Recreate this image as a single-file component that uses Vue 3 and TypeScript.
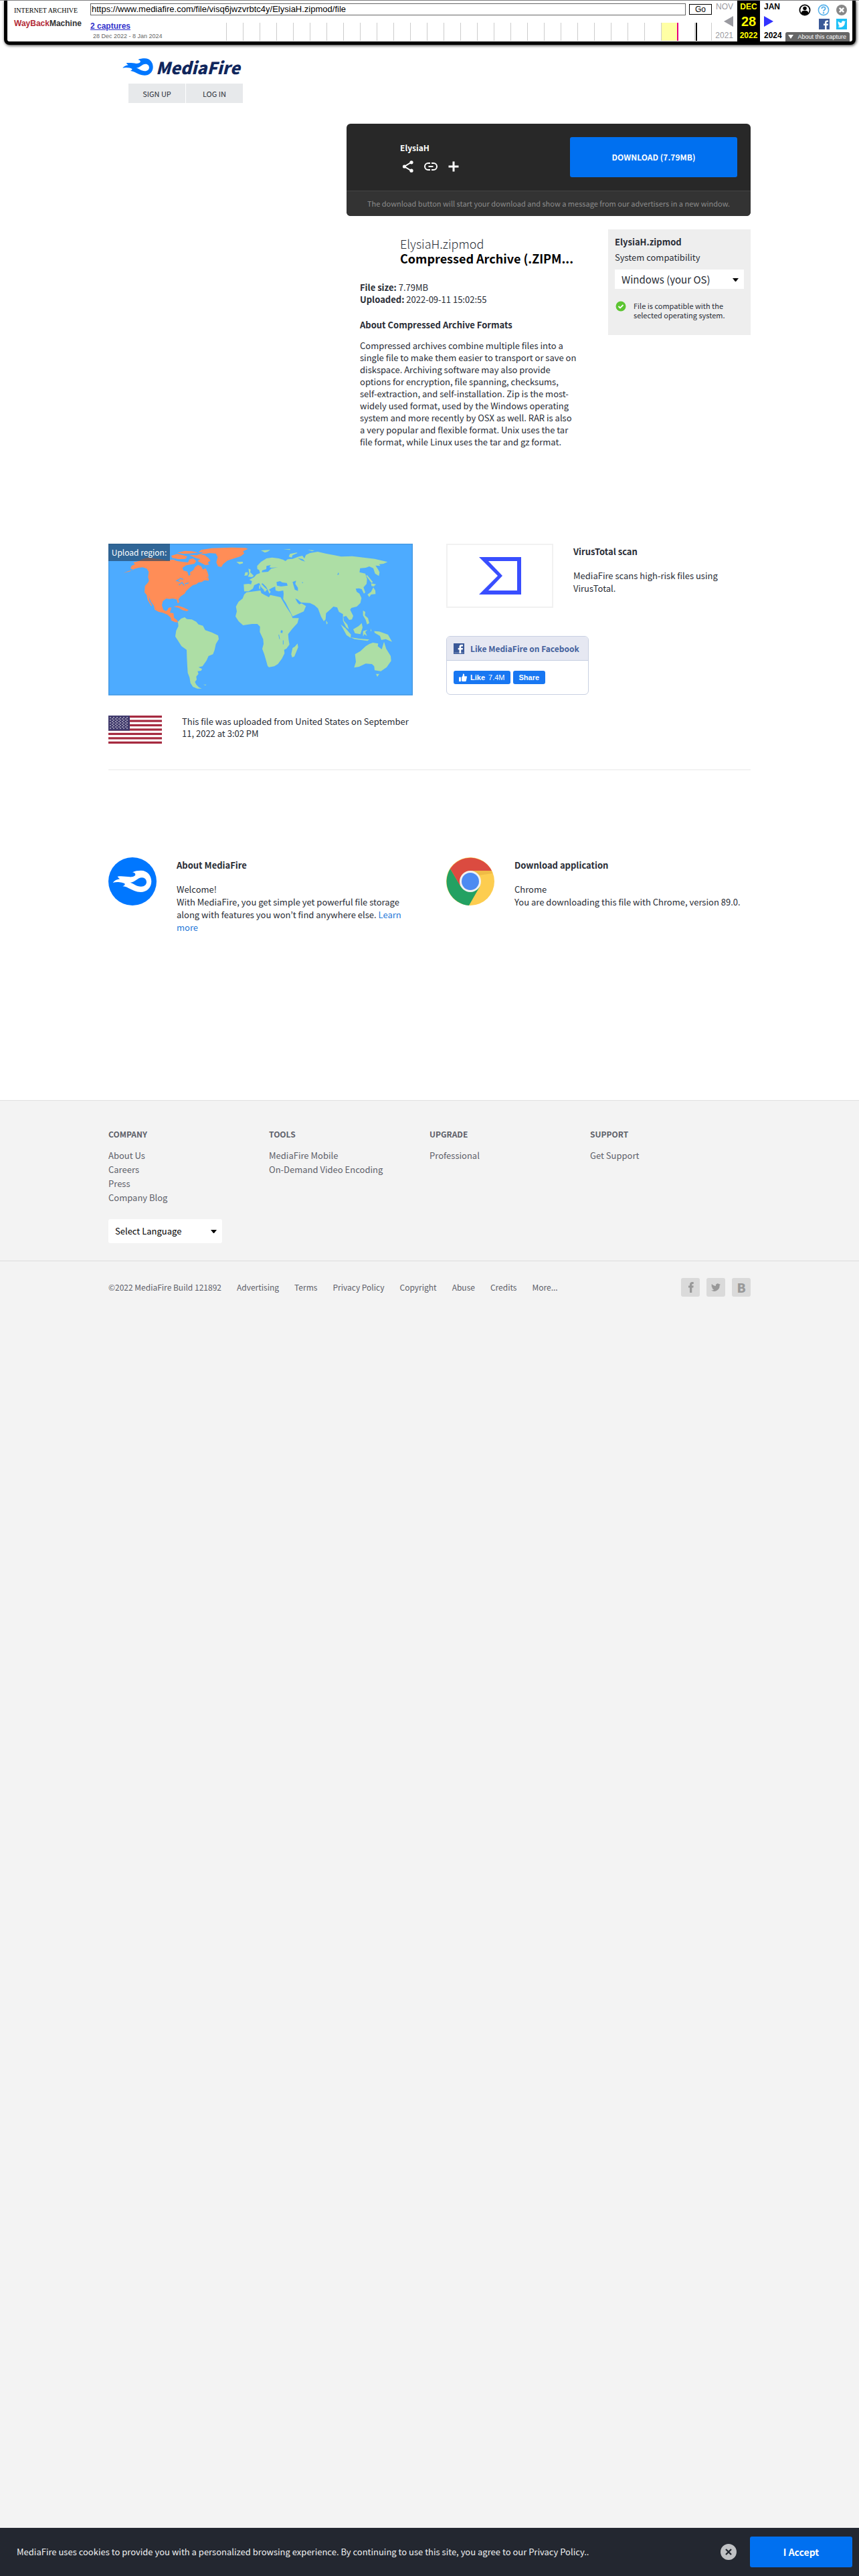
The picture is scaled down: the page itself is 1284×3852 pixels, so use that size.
<script setup lang="ts">
import { ref } from 'vue'

interface LinkColumn {
  title: string
  links: string[]
}

const archiveUrl = ref('https://www.mediafire.com/file/visq6jwzvrbtc4y/ElysiaH.zipmod/file')
const os = ref('Windows (your OS)')
const language = ref('Select Language')

const yearTicks = Array.from({ length: 30 }, (_, i) => i * 25)

const columns: LinkColumn[] = [
  { title: 'COMPANY', links: ['About Us', 'Careers', 'Press', 'Company Blog'] },
  { title: 'TOOLS', links: ['MediaFire Mobile', 'On-Demand Video Encoding'] },
  { title: 'UPGRADE', links: ['Professional'] },
  { title: 'SUPPORT', links: ['Get Support'] },
]

const legalLinks = ['Advertising', 'Terms', 'Privacy Policy', 'Copyright', 'Abuse', 'Credits', 'More...']

const flame =
  'M56 180 C63 170 74 165 88 163 C84 160 80 157 77 152 C96 149 118 153 132 154 C142 155 155 152 157 145 C158 139 152 134 144 133 C154 127 168 125 182 125 C212 125 229 149 229 174 C229 202 208 222 181 222 C160 222 143 212 126 204 C117 199 109 197 100 196 C107 193 111 189 110 185 C102 179 76 174 56 180 Z M134 179 C150 184 160 196 183 197 C198 197 207 188 207 177 C207 166 199 157 187 157 C166 157 158 178 134 179 Z'

const bird =
  'M21 6.5c-.7.3-1.4.5-2.1.6.8-.5 1.3-1.2 1.6-2-.7.4-1.5.7-2.3.9a3.7 3.7 0 0 0-6.3 3.4C8.8 9.2 6.1 7.7 4.3 5.5a3.7 3.7 0 0 0 1.1 4.9c-.6 0-1.2-.2-1.7-.5 0 1.8 1.3 3.3 3 3.7-.5.1-1.1.2-1.7.1.5 1.5 1.8 2.5 3.5 2.6A7.4 7.4 0 0 1 3 17.8 10.5 10.5 0 0 0 19.2 8.4c.7-.5 1.3-1.2 1.8-1.9z'

const northAmerica = [
  'M103 171 L128 162 150 157 135 151 140 139 155 133 148 124 172 118 190 108 215 102 240 106 275 110 300 116 325 111 345 118 370 122 393 124 400 110 416 106 430 118 422 130 402 134 385 137 368 148 372 160 390 165 396 184 404 180 402 168 418 158 424 145 438 135 452 141 460 156 472 150 480 166 486 186 468 196 485 198 486 206 466 204 455 212 440 214 430 222 415 226 400 238 385 252 378 264 360 276 350 290 354 302 347 308 342 290 325 286 310 288 295 286 280 298 276 316 282 336 294 342 302 336 306 327 319 326 314 342 312 350 328 352 330 372 345 384 348 393 335 392 318 384 316 372 300 358 280 350 262 346 244 336 240 318 228 302 220 284 216 272 220 296 232 318 228 320 212 292 208 270 198 258 200 230 214 214 218 206 214 190 217 166 208 152 190 146 170 148 150 154 130 165 Z',
  'M440 78 L452 68 500 60 590 57 650 59 662 63 640 74 645 84 630 96 600 106 570 116 550 132 543 144 528 142 520 124 526 100 518 84 490 82 470 86 448 84 462 78 Z',
  'M318 94 L345 86 372 92 390 98 382 108 352 110 322 104 Z',
  'M345 80 L380 72 410 74 440 80 400 84 372 86 Z',
  'M398 90 L432 92 448 86 468 92 484 104 494 116 482 124 488 134 470 136 452 126 436 118 448 110 424 102 Z',
  'M328 322 L348 318 372 326 396 338 388 343 368 338 352 328 Z',
  'M466 194 L484 190 486 204 474 204 Z',
]

const otherLand = [
  'M348 390 L362 376 378 370 388 378 410 380 430 390 440 402 460 408 470 428 500 438 528 452 531 468 518 490 512 518 505 536 485 544 476 564 458 590 440 594 456 602 452 610 436 612 440 624 430 636 432 650 424 660 430 672 442 684 455 690 435 690 415 682 404 665 400 640 392 620 390 590 388 550 387 516 364 500 350 478 336 456 340 430 350 410 Z',
  'M462 672 L475 672 472 676 Z',
  'M655 258 L690 254 718 250 722 262 740 272 756 280 762 270 780 274 808 280 815 292 835 326 855 356 862 374 890 374 884 396 862 420 842 446 844 470 848 492 835 510 824 516 826 532 814 556 796 580 780 590 756 594 750 588 742 560 735 536 726 512 732 490 730 468 715 436 716 412 704 400 680 400 655 404 640 406 620 388 606 366 612 344 608 322 620 300 638 286 645 268 Z',
  'M884 488 L887 504 870 546 860 550 856 536 862 508 872 502 Z',
  'M645 254 L643 222 665 220 676 222 680 208 668 202 690 190 700 178 716 172 712 158 704 154 703 140 720 122 745 106 770 102 800 106 820 112 830 118 840 110 862 108 890 98 906 94 915 106 922 90 940 82 975 76 1010 84 1050 92 1080 98 1130 96 1180 102 1230 108 1288 122 1270 130 1250 132 1256 140 1234 138 1246 156 1252 168 1249 185 1232 174 1224 150 1206 142 1190 148 1165 150 1162 168 1188 174 1196 198 1194 220 1180 236 1188 258 1182 264 1172 244 1160 240 1145 242 1150 256 1162 264 1171 284 1166 306 1150 322 1126 328 1120 336 1134 364 1128 380 1116 382 1102 364 1090 368 1092 386 1108 404 1114 424 1102 414 1088 386 1088 356 1070 346 1062 326 1045 322 1030 336 1012 352 1010 380 1002 388 990 368 976 330 960 316 940 306 900 304 884 290 874 286 884 304 892 312 902 308 922 320 912 344 862 366 850 342 832 306 820 288 822 264 820 250 800 254 786 250 784 232 770 238 756 246 764 256 758 264 752 250 744 234 728 218 722 220 735 234 748 246 740 254 722 236 712 216 690 226 684 242 665 254 Z',
  'M664 152 L674 156 672 168 688 184 680 190 662 188 668 174 Z',
  'M650 168 L662 168 660 182 646 184 Z',
  'M610 122 L638 121 640 128 624 132 Z',
  'M720 70 L762 68 750 76 738 80 Z',
  'M845 98 L850 86 880 80 884 82 862 92 858 102 Z',
  'M820 66 L850 64 852 68 Z',
  'M930 68 L960 70 950 74 Z',
  'M1196 180 L1222 212 1216 216 1192 184 Z',
  'M1214 218 L1236 222 1226 232 1216 230 Z',
  'M1224 236 L1233 250 1234 266 1214 268 1206 279 1198 268 1214 256 Z',
  'M1012 384 L1020 396 1014 402 Z',
  'M1178 340 L1188 346 1186 362 1200 374 1206 396 1196 402 1190 382 1178 362 Z',
  'M1134 424 L1158 410 1172 396 1176 416 1166 446 1142 442 Z',
  'M1078 402 L1100 420 1124 448 1122 462 1104 450 Z',
  'M1122 460 L1160 466 1206 470 1198 476 1140 468 Z',
  'M1178 432 L1198 426 1188 436 1196 454 1184 446 1178 456 Z',
  'M1212 420 L1216 432 1212 432 Z',
  'M1228 432 L1250 434 1290 448 1308 480 1280 468 1260 472 1254 454 1230 440 Z',
  'M1138 596 L1146 570 1142 536 1166 522 1190 500 1206 490 1222 484 1246 488 1244 500 1262 514 1272 480 1282 512 1302 544 1304 566 1284 594 1258 612 1230 608 1228 590 1218 580 1190 578 1160 592 Z',
  'M1236 624 L1251 624 1242 637 Z',
  'M730 248 L742 252 738 256 Z',
  'M712 226 L718 228 716 244 712 242 Z',
]

const waters = [
  'M790 212 L806 208 816 214 836 216 840 228 810 232 792 228 Z',
  'M862 212 L878 206 874 220 886 238 886 252 872 246 866 226 Z',
  'M745 140 L764 136 758 146 768 148 796 146 766 152 752 166 724 168 726 160 744 154 Z',
  'M810 428 L818 430 816 442 808 438 Z',
  'M1062 180 L1068 168 1070 178 Z',
  'M904 212 L910 214 906 218 Z',
  'M885 104 L908 110 918 120 900 114 Z',
]

// Nine staggered rows, alternating six and five stars
const stars = Array.from({ length: 9 }, (_, row) =>
  Array.from({ length: row % 2 ? 5 : 6 }, (_, col) => ({
    x: (row % 2 ? 6 : 3) + col * 5,
    y: 3 + row * 2,
  })),
).flat()
</script>

<template>
  <div class="page">
    <div class="topline"></div>
    <header class="wayback">
      <a class="wb-logo" href="#">
        <span class="wb-org">INTERNET ARCHIVE</span>
        <span class="wb-name"><b>WayBack</b>Machine</span>
      </a>
      <div class="wb-middle">
        <form class="wb-form" @submit.prevent>
          <input v-model="archiveUrl" type="text" aria-label="Archived address" />
          <button type="submit">Go</button>
        </form>
        <div class="wb-row">
          <div class="wb-captures">
            <a href="#">2 captures</a>
            <span>28 Dec 2022 - 8 Jan 2024</span>
          </div>
          <svg class="wb-spark" width="726" height="27" viewBox="0 0 726 27">
            <rect x="650" y="0" width="25" height="27" fill="#ffffa5" />
            <rect v-for="x in yearTicks" :key="x" :x="x" y="0" width="1" height="27" fill="#ccc" />
            <rect x="674" y="0" width="2" height="27" fill="#e6007e" />
            <rect x="702" y="0" width="2" height="27" fill="#000" />
          </svg>
        </div>
      </div>
      <div class="wb-date muted">
        <span>NOV</span>
        <svg width="14" height="16" viewBox="0 0 14 16"><path d="M14 0 V16 L0 8 Z" fill="#9a9aa0" /></svg>
        <span>2021</span>
      </div>
      <div class="wb-date current">
        <span>DEC</span>
        <strong>28</strong>
        <span>2022</span>
      </div>
      <div class="wb-date next">
        <span>JAN</span>
        <svg width="14" height="16" viewBox="0 0 14 16"><path d="M0 0 V16 L14 8 Z" fill="#33f" /></svg>
        <span>2024</span>
      </div>
      <div class="wb-tools">
        <div class="wb-icons">
          <svg width="18" height="18" viewBox="0 0 18 18">
            <circle cx="9" cy="9" r="7.6" fill="#fff" stroke="#000" stroke-width="1.8" />
            <circle cx="9" cy="6.5" r="2.8" />
            <path d="M3.5 14 C4 10.5 6 9.8 9 9.8 S14 10.5 14.5 14 Q9 18 3.5 14Z" />
          </svg>
          <svg width="18" height="18" viewBox="0 0 18 18">
            <circle cx="9" cy="9" r="7.6" fill="#fff" stroke="#5ab2ea" stroke-width="1.6" />
            <path d="M6.3 7 C6.3 3.6 11.7 3.7 11.7 6.8 C11.7 8.8 9 8.8 9 11" fill="none" stroke="#5ab2ea" stroke-width="1.8" />
            <circle cx="9" cy="13.2" r="1.2" fill="#5ab2ea" />
          </svg>
          <svg width="16" height="16" viewBox="0 0 16 16">
            <circle cx="8" cy="8" r="8" fill="#888" />
            <path d="M4.8 4.8 L11.2 11.2 M11.2 4.8 L4.8 11.2" stroke="#fff" stroke-width="2.4" />
          </svg>
        </div>
        <div class="wb-icons">
          <svg width="16" height="16" viewBox="0 0 16 16">
            <rect width="16" height="16" fill="#3b5998" />
            <path d="M9 16 V10 H7 V7.5 H9 V5.6 C9 3.4 10.3 2.4 12.2 2.4 H14 V4.8 H12.8 C11.8 4.8 11.5 5.3 11.5 6 V7.5 H14 L13.6 10 H11.5 V16Z" fill="#fff" />
          </svg>
          <svg width="16" height="16" viewBox="0 0 24 24">
            <rect width="24" height="24" fill="#1dc1f7" />
            <path :d="bird" fill="#fff" />
          </svg>
        </div>
        <button class="wb-about" type="button">
          <svg width="8" height="6" viewBox="0 0 8 6"><path d="M0 0 H8 L4 6 Z" fill="#fff" /></svg>
          About this capture
        </button>
      </div>
    </header>

    <main class="content">
      <div class="brand">
        <a class="brand-logo" href="#" aria-label="MediaFire">
          <svg width="46" height="26" viewBox="55 124 175 99"><path :d="flame" fill="#0077ff" fill-rule="evenodd" /></svg>
          <span>MediaFire</span>
        </a>
        <nav class="auth">
          <a href="#">SIGN UP</a>
          <a href="#">LOG IN</a>
        </nav>
      </div>

      <section class="download">
        <div class="download-main">
          <div class="download-info">
            <h1>ElysiaH</h1>
            <div class="download-icons">
              <svg width="20" height="20" viewBox="0 0 20 20" fill="#fff">
                <path d="M15 3.5 L4.5 10 L15 16.5" fill="none" stroke="#fff" stroke-width="2" />
                <circle cx="15" cy="3.8" r="2.6" /><circle cx="4.5" cy="10" r="2.6" /><circle cx="15" cy="16.2" r="2.6" />
              </svg>
              <svg width="20" height="20" viewBox="0 0 20 20" fill="none" stroke="#fff" stroke-width="2">
                <path d="M9 5 H6 A5 5 0 0 0 6 15 H9 M11 5 H14 A5 5 0 0 1 14 15 H11 M6.5 10 H13.5" />
              </svg>
              <svg width="20" height="20" viewBox="0 0 20 20" fill="none" stroke="#fff" stroke-width="3">
                <path d="M10 2.5 V17.5 M2.5 10 H17.5" />
              </svg>
            </div>
          </div>
          <button class="download-button" type="button">DOWNLOAD (7.79MB)</button>
        </div>
        <p class="download-note">The download button will start your download and show a message from our advertisers in a new window.</p>
      </section>

      <div class="details">
        <section class="file">
          <div class="file-title">
            <h2>ElysiaH.zipmod</h2>
            <h3>Compressed Archive (.ZIPM...</h3>
          </div>
          <p class="file-meta"><b>File size:</b> 7.79MB<br /><b>Uploaded:</b> 2022-09-11 15:02:55</p>
          <h4>About Compressed Archive Formats</h4>
          <p class="file-about">
            Compressed archives combine multiple files into a single file to make them easier to transport or save on
            diskspace. Archiving software may also provide options for encryption, file spanning, checksums,
            <span class="keep">self-extraction,</span> and self-installation. Zip is the most-widely used format, used by the Windows operating
            system and more recently by OSX as well. RAR is also a very popular and flexible format. Unix uses the tar
            file format, while Linux uses the tar and gz format.
          </p>
        </section>
        <aside class="compat">
          <h4>ElysiaH.zipmod</h4>
          <label for="os">System compatibility</label>
          <div class="picker">
            <select id="os" v-model="os"><option>Windows (your OS)</option></select>
            <svg width="9" height="5" viewBox="0 0 9 5"><path d="M0 0 H9 L5 5 H4 Z" /></svg>
          </div>
          <div class="compat-ok">
            <svg width="16" height="16" viewBox="0 0 16 16">
              <circle cx="8" cy="8" r="7.5" fill="#5cc532" />
              <path d="M4.5 8 L7 10.5 L11.5 6" fill="none" stroke="#fff" stroke-width="1.8" />
            </svg>
            <p>File is compatible with the selected operating system.</p>
          </div>
        </aside>
      </div>

      <div class="pair origin">
        <section>
          <div class="map">
            <svg viewBox="36 40 1365 680">
              <rect x="36" y="40" width="1365" height="680" fill="#4dabff" />
              <path v-for="d in northAmerica" :key="d" :d="d" fill="#ff8d57" />
              <path v-for="d in otherLand" :key="d" :d="d" fill="#addea5" />
              <path v-for="d in waters" :key="d" :d="d" fill="#4dabff" />
              <path d="M372 200 L360 196 342 206 356 210 M352 226 L366 214 376 228 M380 220 L396 216" fill="none" stroke="#4dabff" stroke-width="4" />
              <path d="M800 448 L804 468 M820 474 L820 492" stroke="#4dabff" stroke-width="3" />
              <rect x="38" y="42" width="1361" height="676" fill="none" stroke="#4498e2" stroke-width="4" />
            </svg>
            <span>Upload region:</span>
          </div>
          <div class="uploaded">
            <svg width="80" height="42" viewBox="0 0 80 42">
              <rect width="80" height="42" fill="#fff" />
              <rect v-for="n in 7" :key="n" x="0" :y="((n - 1) * 84) / 13" width="80" :height="42 / 13" fill="#a62a40" />
              <rect width="32" height="22.6" fill="#403a6c" />
              <circle v-for="(s, i) in stars" :key="i" :cx="s.x" :cy="s.y" r=".8" fill="#fff" />
            </svg>
            <p>This file was uploaded from United States on September 11, 2022 at 3:02 PM</p>
          </div>
        </section>
        <section>
          <div class="virus">
            <div class="virus-logo">
              <svg width="63" height="56" viewBox="0 0 63 56"><path d="M0 0 H63 V56 H0 L28 28 Z M14 6 L35 28 L14 50 H57 V6 Z" fill="#394eff" fill-rule="evenodd" /></svg>
            </div>
            <div class="virus-text">
              <h4>VirusTotal scan</h4>
              <p>MediaFire scans high-risk files using VirusTotal.</p>
            </div>
          </div>
          <div class="fb">
            <div class="fb-head">
              <svg width="16" height="16" viewBox="0 0 16 16">
                <rect width="16" height="16" fill="#3b5998" />
                <rect y="13.5" x="1" width="14" height="1.5" fill="#6d84b4" />
                <path d="M8.5 15 V9.5 H6.7 V7 H8.5 V5 C8.5 3 9.7 2 11.6 2 H14 V4.4 H12.5 C11.5 4.4 11.2 4.8 11.2 5.6 V7 H14 L13.6 9.5 H11.2 V15Z" fill="#fff" />
              </svg>
              <span>Like MediaFire on Facebook</span>
            </div>
            <div class="fb-body">
              <button type="button">
                <svg width="12" height="12" viewBox="0 0 12 12" fill="#fff"><path d="M0 5.5 H3 V12 H0Z M4 5.5 C5.5 4.5 6 3 6 .5 C7.5 0 8.6 1.2 8 4.2 H11 C12 4.2 12.2 5.2 11.8 6 L10.8 11 C10.6 11.7 10 12 9.5 12 H5.5 L4 11.3Z" /></svg>
                <b>Like</b><span>7.4M</span>
              </button>
              <button type="button"><b>Share</b></button>
            </div>
          </div>
        </section>
      </div>

      <div class="pair info">
        <section class="info-item">
          <svg width="72" height="72" viewBox="36 66 216 216">
            <circle cx="144" cy="174" r="108" fill="#0077ff" />
            <path :d="flame" fill="#fff" fill-rule="evenodd" />
          </svg>
          <div>
            <h4>About MediaFire</h4>
            <p>Welcome!</p>
            <p>With MediaFire, you get simple yet powerful file storage along with features you won’t find anywhere else. <a href="#">Learn more</a></p>
          </div>
        </section>
        <section class="info-item">
          <svg width="72" height="72" viewBox="0 0 72 72">
            <circle cx="36" cy="36" r="36" fill="#fdcd50" />
            <path d="M6 17 A36 36 0 0 0 34 72 L50 44 L36 36 L22 44 Z" fill="#23a162" />
            <path d="M6 17 A36 36 0 0 1 68 20 H36 L36 36 L20 41 Z" fill="#db4b40" />
            <path d="M36 20 H68 L69 24 L48 27 Z" fill="#e3a93c" opacity=".5" />
            <circle cx="36" cy="36" r="16" fill="#f2f2f2" />
            <circle cx="36" cy="36" r="13" fill="#4d8bf2" />
          </svg>
          <div>
            <h4>Download application</h4>
            <p>Chrome</p>
            <p>You are downloading this file with Chrome, version 89.0.</p>
          </div>
        </section>
      </div>
    </main>

    <footer class="footer">
      <div class="footer-top">
        <div class="columns">
          <nav v-for="c in columns" :key="c.title">
            <h5>{{ c.title }}</h5>
            <a v-for="l in c.links" :key="l" href="#">{{ l }}</a>
          </nav>
        </div>
        <div class="picker language">
          <select v-model="language" aria-label="Language"><option>Select Language</option></select>
          <svg width="9" height="5" viewBox="0 0 9 5"><path d="M0 0 H9 L5 5 H4 Z" /></svg>
        </div>
      </div>
      <div class="legal">
        <div class="legal-inner">
          <nav>
            <span>©2022 MediaFire Build 121892</span>
            <a v-for="l in legalLinks" :key="l" href="#">{{ l }}</a>
          </nav>
          <div class="social">
            <a href="#" aria-label="Facebook">
              <svg width="28" height="28" viewBox="0 0 28 28"><path d="M13 22 V14.5 H11 V11.5 H13 V10 C13 7.2 14.5 6 16.8 6 H18.7 V9 H17.5 C16.5 9 16.3 9.5 16.3 10.3 V11.5 H18.7 L18.3 14.5 H16.3 V22Z" fill="#999" /></svg>
            </a>
            <a href="#" aria-label="Twitter">
              <svg width="28" height="28" viewBox="-6 -6 36 36"><path :d="bird" fill="#999" /></svg>
            </a>
            <a href="#" aria-label="Blog"><b>B</b></a>
          </div>
        </div>
      </div>
    </footer>

    <div class="cookies">
      <p>MediaFire uses cookies to provide you with a personalized browsing experience. By continuing to use this site, you agree to our Privacy Policy..</p>
      <button class="cookies-close" type="button" aria-label="Close">
        <svg width="24" height="24" viewBox="0 0 24 24">
          <circle cx="12" cy="12" r="12" fill="#bfc1c4" />
          <path d="M8 8 L16 16 M16 8 L8 16" stroke="#232730" stroke-width="2.4" />
        </svg>
      </button>
      <button class="cookies-accept" type="button">I Accept</button>
    </div>
  </div>
</template>

<style>
body {
  margin: 0;
  background: #f3f3f3;
}
</style>

<style scoped>
* {
  box-sizing: border-box;
}
.page {
  display: flex;
  flex-direction: column;
  min-height: 100vh;
  background: #fff;
  color: #282c35;
  font: 13px/18px "Noto Sans CJK KR", sans-serif;
}
h1, h2, h3, h4, h5, p {
  margin: 0;
  font-size: inherit;
}
a {
  color: inherit;
  text-decoration: none;
}
button, input, select {
  font: inherit;
  margin: 0;
}
svg {
  display: block;
  flex: none;
}

/* Archive toolbar */
.topline {
  height: 1px;
  background: #98989a;
}
.wayback {
  display: flex;
  height: 66px;
  margin: 0 5px 0 6px;
  padding-left: 10px;
  border: 5px solid #000;
  border-top: 0;
  border-radius: 0 0 8px 8px;
  box-shadow: 1px 1px 4px #333;
  background: #fff;
  font-family: "Liberation Sans", Arial, sans-serif;
  color: #000;
}
.wb-logo {
  width: 114px;
  padding-top: 9px;
  white-space: nowrap;
}
.wb-org {
  display: block;
  font: 10px/12px "Liberation Serif", serif;
}
.wb-name {
  display: block;
  color: #333;
  font: bold 12px/26px "Liberation Sans", sans-serif;
}
.wb-name b {
  color: #b32b36;
}
.wb-middle {
  flex: 1;
  min-width: 0;
  padding-top: 4px;
}
.wb-form {
  display: flex;
  align-items: center;
  gap: 5px;
}
.wb-form input {
  flex: 1;
  min-width: 0;
  height: 18px;
  padding: 0 1px;
  border: 1px solid #666;
  background: #fff;
  font-size: 13px;
}
.wb-form button {
  width: 34px;
  height: 16px;
  padding: 0;
  border: 1px solid #000;
  background: #fff;
  font-size: 12px;
  line-height: 14px;
}
.wb-row {
  display: flex;
  justify-content: space-between;
  padding-top: 11px;
}
.wb-captures {
  display: flex;
  flex-direction: column;
}
.wb-captures a {
  color: #33c;
  font: bold 12px/10px "Liberation Sans", sans-serif;
  text-decoration: underline;
}
.wb-captures span {
  padding: 4px 0 0 4px;
  color: #666;
  font-size: 9px;
  line-height: 12px;
}
.wb-date {
  display: flex;
  flex-direction: column;
  align-items: flex-end;
  justify-content: space-between;
  width: 38px;
  padding: 2px 6px 2px 0;
  font-size: 12px;
  line-height: 14px;
}
.wb-date.muted {
  color: #9a9aa0;
}
.wb-date.current {
  align-items: center;
  width: 34px;
  padding: 2px 0;
  background: #000;
  color: #ff0;
  font-weight: bold;
}
.wb-date.current strong {
  font-size: 20px;
}
.wb-date.next {
  align-items: flex-start;
  width: 36px;
  padding: 2px 0 2px 6px;
  font-weight: bold;
}
.wb-tools {
  display: flex;
  flex-direction: column;
  align-items: flex-end;
  justify-content: space-between;
  width: 102px;
  padding: 5px 4px 0 0;
}
.wb-icons {
  display: flex;
  align-items: center;
  gap: 10px;
  padding-right: 4px;
}
.wb-about {
  display: flex;
  align-items: center;
  gap: 6px;
  height: 14px;
  padding: 0 5px 0 4px;
  border: 0;
  border-radius: 3px 3px 0 0;
  background: #666;
  color: #fff;
  font-size: 9px;
  line-height: 14px;
  white-space: nowrap;
}

/* Page body */
.content {
  width: 100%;
  max-width: 960px;
  margin: 0 auto;
  padding: 20px 0 249px;
}
.brand {
  padding-left: 21px;
}
.brand-logo {
  display: flex;
  align-items: center;
  gap: 4px;
  height: 26px;
  color: #10265c;
  font-size: 25px;
  font-style: italic;
  font-weight: 900;
}
.auth {
  display: flex;
  gap: 1px;
  margin: 12px 0 0 9px;
}
.auth a {
  width: 85px;
  height: 29px;
  background: #e7e9eb;
  font-size: 11px;
  line-height: 31px;
  text-align: center;
}
.download {
  width: 604px;
  margin: 31px 0 0 auto;
  overflow: hidden;
  border-radius: 6px;
  background: #282828;
  color: #fff;
}
.download-main {
  display: flex;
  justify-content: space-between;
  height: 100px;
  padding: 20px 20px 0 80px;
}
.download-info {
  padding-top: 7px;
}
.download-info h1 {
  font-size: 12px;
}
.download-icons {
  display: flex;
  gap: 14px;
  padding: 9px 0 0 2px;
}
.download-button {
  width: 250px;
  height: 60px;
  border: 0;
  border-radius: 3px;
  background: #0070f0;
  color: #fff;
  font-size: 12px;
  font-weight: bold;
}
.download-note {
  height: 38px;
  border-top: 1px solid #444;
  background: #333;
  color: #8c8c8c;
  font-size: 11px;
  line-height: 37px;
  text-align: center;
}
.details {
  display: flex;
  justify-content: space-between;
  width: 604px;
  margin: 20px 0 0 auto;
  padding-left: 20px;
}
.file {
  width: 326px;
}
.file-title {
  padding: 10px 0 0 60px;
  font-size: 18px;
  line-height: 22px;
  white-space: nowrap;
}
.file-title h2 {
  font-weight: 300;
}
.file-title h3 {
  color: #000;
}
.file-meta {
  padding-top: 24px;
}
.file h4 {
  padding: 20px 0 13px;
}
.keep {
  white-space: nowrap;
}
.compat {
  width: 213px;
  height: 158px;
  padding: 8px 10px 0;
  background: #eee;
}
.compat h4 {
  line-height: 22px;
}
.compat label {
  display: block;
  line-height: 24px;
}
.picker {
  position: relative;
  margin-top: 6px;
}
.picker select {
  width: 100%;
  height: 29px;
  padding: 0 10px;
  border: 0;
  appearance: none;
  background: #fff;
  color: #282c35;
  font-size: 15px;
}
.picker svg {
  position: absolute;
  top: 50%;
  right: 8px;
  margin-top: -2px;
}
.compat-ok {
  display: flex;
  gap: 11px;
  padding: 18px 0 0 1px;
  font-size: 11px;
  line-height: 14px;
}
.pair {
  display: flex;
  gap: 50px;
}
.pair > section {
  flex: 1;
  min-width: 0;
}
.origin {
  margin-top: 143px;
  padding-bottom: 38px;
  border-bottom: 2px solid #f3f3f3;
}
.map {
  position: relative;
}
.map svg {
  width: 100%;
}
.map span {
  position: absolute;
  top: 0;
  left: 0;
  width: 92px;
  height: 26px;
  background: rgba(32, 64, 96, 0.65);
  color: #fff;
  font-size: 12px;
  line-height: 26px;
  text-align: center;
}
.uploaded {
  display: flex;
  gap: 30px;
  padding-top: 30px;
}
.uploaded p {
  flex: 1;
}
.virus {
  display: flex;
  gap: 30px;
}
.virus-logo {
  display: grid;
  flex: none;
  place-items: center;
  width: 160px;
  height: 96px;
  border: 2px solid #f1f1f1;
}
.virus-text h4 {
  padding: 3px 0 17px;
}
.virus-text p,
.info-item p {
  line-height: 19px;
}
.fb {
  width: 213px;
  margin-top: 42px;
  overflow: hidden;
  border: 1px solid #c9d0e2;
  border-radius: 6px;
}
.fb-head {
  display: flex;
  align-items: center;
  gap: 9px;
  height: 36px;
  padding-left: 10px;
  border-bottom: 1px solid #c4cde0;
  background: #e6e8f2;
  color: #44619d;
  font-size: 12px;
  font-weight: bold;
}
.fb-body {
  display: flex;
  gap: 4px;
  padding: 15px 10px;
}
.fb-body button {
  display: flex;
  align-items: center;
  gap: 5px;
  height: 20px;
  padding: 0 9px 0 8px;
  border: 0;
  border-radius: 3px;
  background: #1877f2;
  color: #fff;
  font: 11px/20px "Liberation Sans", sans-serif;
}
.info {
  margin-top: 130px;
}
.info-item {
  display: flex;
  gap: 30px;
}
.info-item h4 {
  padding: 3px 0 17px;
}
.info-item a {
  color: #2577d8;
}

/* Footer */
.footer {
  flex: 1;
  border-top: 1px solid #e0e0e0;
  background: #f3f3f3;
  color: #5d6069;
}
.footer-top {
  max-width: 960px;
  margin: 0 auto;
  padding: 40px 0 26px;
}
.columns {
  display: grid;
  grid-template-columns: repeat(4, 1fr);
}
.columns nav {
  display: flex;
  flex-direction: column;
}
.columns h5 {
  padding-bottom: 11px;
  font-size: 12px;
  line-height: 20px;
}
.columns a {
  line-height: 21px;
}
.language {
  width: 170px;
  margin-top: 22px;
}
.language select {
  height: 36px;
  border-radius: 3px;
  color: #000;
  font-size: 13px;
}
.legal {
  border-top: 1px solid #ddd;
}
.legal-inner {
  display: flex;
  align-items: center;
  justify-content: space-between;
  max-width: 960px;
  height: 78px;
  margin: 0 auto;
}
.legal nav {
  display: flex;
  gap: 23px;
  font-size: 12px;
}
.social {
  display: flex;
  gap: 10px;
}
.social a {
  width: 28px;
  height: 28px;
  border-radius: 3px;
  background: #dadada;
}
.social b {
  display: block;
  color: #999;
  font-size: 19px;
  font-weight: 900;
  line-height: 28px;
  text-align: center;
}

/* Cookie notice */
.cookies {
  position: sticky;
  bottom: 0;
  display: flex;
  align-items: center;
  height: 72px;
  padding: 0 10px 0 25px;
  background: #232730;
  color: #f0f1f2;
}
.cookies p {
  flex: 1;
}
.cookies button {
  padding: 0;
  border: 0;
}
.cookies-close {
  background: none;
}
.cookies-accept {
  width: 153px;
  height: 46px;
  margin-left: 20px;
  border-radius: 3px;
  background: #0070f0;
  color: #fff;
  font-size: 14px;
  font-weight: bold;
}
</style>
